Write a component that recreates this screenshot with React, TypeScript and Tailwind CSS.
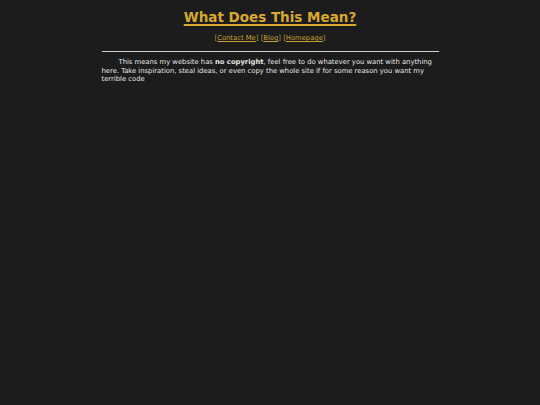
export default function App() {
  const links = ["Contact Me", "Blog", "Homepage"];

  return (
    <div className="min-h-screen bg-[#1c1c1c] text-[#e6e6e6] font-['DejaVu_Sans',sans-serif]">
      <div className="mx-auto w-[337px] pt-[9px]">
        <h1 className="text-center text-[13.5px] font-bold leading-[17px] text-[#d9a92e] underline decoration-[1.5px] underline-offset-2">
          What Does This Mean?
        </h1>
        <div className="mt-[8px] text-center text-[6.8px] leading-[9px] text-[#b89a3e]">
          {links.map((l, i) => (
            <span key={l}>
              [<a href="#" className="text-[#c9a034] underline">{l}</a>]
              {i < links.length - 1 ? " " : ""}
            </span>
          ))}
        </div>
        <hr className="mt-[8px] border-0 border-t border-[#cfcfcf]" />
        <p className="mt-[6px] indent-[17px] text-[6.8px] leading-[8.5px]">
          This means my website has <b>no copyright</b>, feel free to do whatever you want with anything
          here. Take inspiration, steal ideas, or even copy the whole site if for some reason you want my
          terrible code
        </p>
      </div>
    </div>
  );
}
